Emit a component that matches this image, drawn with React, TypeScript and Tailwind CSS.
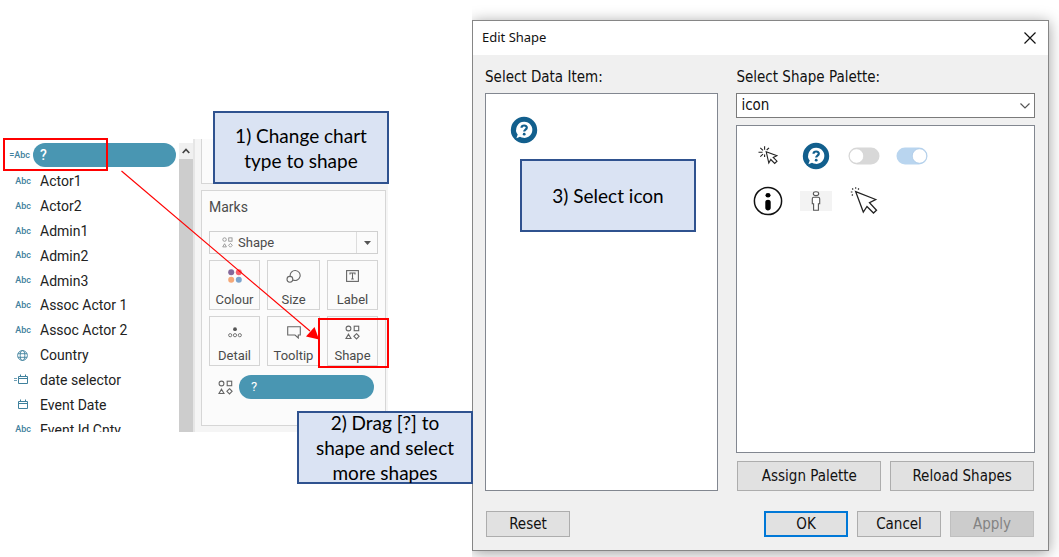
import type { ReactNode } from "react";

type FieldKind = "text" | "globe" | "date" | "calcDate";

const fields: { name: string; kind: FieldKind }[] = [
  { name: "Actor1", kind: "text" },
  { name: "Actor2", kind: "text" },
  { name: "Admin1", kind: "text" },
  { name: "Admin2", kind: "text" },
  { name: "Admin3", kind: "text" },
  { name: "Assoc Actor 1", kind: "text" },
  { name: "Assoc Actor 2", kind: "text" },
  { name: "Country", kind: "globe" },
  { name: "date selector", kind: "calcDate" },
  { name: "Event Date", kind: "date" },
  { name: "Event Id Cnty", kind: "text" },
];

function CalendarIcon() {
  return (
    <svg width="10" height="11" viewBox="0 0 10 11" fill="none" stroke="#3f819d" aria-hidden="true">
      <path d="M.5 2.500h9v7h-9zM.5 4.500h9M2.500 .5v2M7.500 .5v2" />
    </svg>
  );
}

function FieldIcon({ kind }: { kind: FieldKind }) {
  if (kind === "text") return <span>Abc</span>;
  if (kind === "globe")
    return (
      <svg width="11" height="11" viewBox="0 0 11 11" fill="none" stroke="#3f819d" strokeWidth=".9" className="mr-[3px]" aria-hidden="true">
        <circle cx="5.500" cy="5.500" r="4.900" />
        <ellipse cx="5.500" cy="5.500" rx="2.300" ry="4.900" />
        <path d="M1 3.700h9M1 7.300h9" />
      </svg>
    );
  return (
    <span className="mr-[3px] flex items-center">
      {kind === "calcDate" && (
        <svg width="4" height="5" viewBox="0 0 4 5" stroke="#6fa0b6" aria-hidden="true">
          <path d="M0 1.500h3M0 3.500h3" />
        </svg>
      )}
      <CalendarIcon />
    </span>
  );
}

function ShapesIcon({ size = 15, color = "#666" }: { size?: number; color?: string }) {
  return (
    <svg width={size} height={size} viewBox="0 0 15 15" fill="none" stroke={color} strokeWidth="1.100" aria-hidden="true">
      <circle cx="3.500" cy="3.500" r="2.400" />
      <rect x="9.200" y="1.200" width="4.500" height="4.500" />
      <path d="M3.500 9.200 6 13.500H1zM11.500 8.700l2.600 2.600-2.600 2.600-2.600-2.600z" />
    </svg>
  );
}

const marks: { name: string; icon: ReactNode }[] = [
  {
    name: "Colour",
    icon: (
      <svg width="14" height="14" viewBox="0 0 14 14" aria-hidden="true">
        <circle cx="3.200" cy="3.200" r="3" fill="#85689a" />
        <circle cx="10.800" cy="3.200" r="3" fill="#f8606b" />
        <circle cx="3.200" cy="10.800" r="3" fill="#f5a878" />
        <circle cx="10.800" cy="10.800" r="3" fill="#7ba3cc" />
      </svg>
    ),
  },
  {
    name: "Size",
    icon: (
      <svg width="15" height="14" viewBox="0 0 15 14" fill="none" stroke="#666" strokeWidth="1.100" aria-hidden="true">
        <path d="M4.200 7.200A5 5 0 1 1 7 11" />
        <circle cx="3.900" cy="10.300" r="2.900" />
      </svg>
    ),
  },
  {
    name: "Label",
    icon: (
      <svg width="13" height="12" viewBox="0 0 13 12" fill="none" stroke="#666" strokeWidth="1.100" aria-hidden="true">
        <rect x=".6" y=".6" width="11.800" height="10.800" />
        <path d="M4 4.500V3h5v1.500M6.500 3v6M5.200 9h2.600" />
      </svg>
    ),
  },
  {
    name: "Detail",
    icon: (
      <svg width="14" height="11" viewBox="0 0 14 11" fill="none" stroke="#777" aria-hidden="true">
        <circle cx="7" cy="2.200" r="1.900" fill="#555" stroke="none" />
        <circle cx="2.200" cy="8.200" r="1.600" />
        <circle cx="7" cy="8.200" r="1.600" />
        <circle cx="11.800" cy="8.200" r="1.600" />
      </svg>
    ),
  },
  {
    name: "Tooltip",
    icon: (
      <svg width="14" height="13" viewBox="0 0 14 13" fill="none" stroke="#666" strokeWidth="1.100" aria-hidden="true">
        <path d="M.7 .7h12.600v8.300h-2v3L8 9H.7z" />
      </svg>
    ),
  },
  { name: "Shape", icon: <ShapesIcon /> },
];

function HelpIcon() {
  return (
    <svg width="28" height="28" viewBox="0 0 28 28" aria-hidden="true">
      <circle cx="14" cy="14" r="13.200" fill="#125f8d" />
      <path d="M14.200 5.700a8.100 8.100 0 1 1-4.200 15l-3.600 1.500 1.300-3.600A8.100 8.100 0 0 1 14.200 5.700z" fill="#fff" />
      <path d="M11.500 11.700c.2-3 5.500-2.900 5.300 0-.1 1.900-2.600 1.900-2.600 3.900" fill="none" stroke="#125f8d" strokeWidth="2.200" />
      <circle cx="14.200" cy="18.200" r="1.400" fill="#125f8d" />
    </svg>
  );
}

function ToggleIcon({ on }: { on?: boolean }) {
  return (
    <svg width="32" height="18" viewBox="0 0 32 18" aria-hidden="true">
      <rect x=".5" y=".5" width="31" height="17" rx="8.500" fill={on ? "#b9d5ef" : "#d8d8d8"} />
      <circle cx={on ? 23.500 : 8.500} cy="9" r="7.200" fill="#fff" stroke={on ? "#a3c3e2" : "#cfcfcf"} strokeWidth=".6" />
    </svg>
  );
}

const shapes: { name: string; icon: ReactNode }[] = [
  {
    name: "Click cursor",
    icon: (
      <svg width="20" height="20" viewBox="0 0 20 20" fill="none" stroke="#222" strokeWidth="1.100" aria-hidden="true">
        <path d="M8.200 5.700L19 9.700l-3.800 1.700 3.800 3.800-2.300 2.300-3.900-4-2 3.500z" />
        <path d="M.5 6.200h4M2.300 1.800l2.700 2.500M6.600 .3v3.500M11 1.800L8.700 4M2.300 10.600l2.700-2.500M6.600 8.500v2.500" />
      </svg>
    ),
  },
  { name: "Help", icon: <HelpIcon /> },
  { name: "Toggle off", icon: <ToggleIcon /> },
  { name: "Toggle on", icon: <ToggleIcon on /> },
  {
    name: "Information",
    icon: (
      <svg width="30" height="30" viewBox="0 0 30 30" aria-hidden="true">
        <circle cx="15" cy="15" r="13.600" fill="none" stroke="#111" strokeWidth="1.500" />
        <ellipse cx="15" cy="9.300" rx="2.500" ry="2.300" />
        <path d="M12.300 16c0-3 5.400-3 5.400 0v6c0 3.200-5.400 3.200-5.400 0z" />
      </svg>
    ),
  },
  {
    name: "Person",
    icon: (
      <svg width="32" height="20" viewBox="0 0 32 20" aria-hidden="true">
        <rect width="32" height="20" fill="#f3f3f3" />
        <g fill="#fff" stroke="#555" strokeWidth="1.100">
          <ellipse cx="16" cy="2.700" rx="2.700" ry="1.900" />
          <path d="M13.800 6.200h4.400q1.500 0 1.500 1.500v5h-1.300v6.500h-4.800v-6.500h-1.300v-5q0-1.500 1.500-1.500z" />
        </g>
      </svg>
    ),
  },
  {
    name: "Large cursor",
    icon: (
      <svg width="28" height="28" viewBox="0 0 28 28" fill="none" stroke="#222" strokeWidth="1.300" aria-hidden="true">
        <path d="M5.700 4.700l20 7.800-6.200 3.300 7 7.500-3 2.700-6.500-6.500-3.700 5.500z" />
        <path d="M.8 5h1.600M2.200 1.500l1 1M5.700 .3v1.500M9 1.500l-1 1M1.800 8.500l1-1" strokeWidth="1.100" />
      </svg>
    ),
  },
];

function Callout({ children, className }: { children: ReactNode; className: string }) {
  return (
    <p
      className={`absolute flex h-[73px] w-44 items-center justify-center border-2 border-[#2f528f] bg-[#dae3f3] text-center font-['Lato',sans-serif] text-[19px] leading-[25px] text-black ${className}`}
    >
      {children}
    </p>
  );
}

function DataPane() {
  return (
    <nav aria-label="Fields" className="flex w-[193px] overflow-hidden bg-white pt-1">
      <div className="min-w-0 flex-1">
        <div className="flex h-[26px] items-start">
          <span className="w-[33px] pr-[3px] text-right text-[9px] leading-6 font-medium text-[#3f819d]">=Abc</span>
          <button className="h-6 w-[143px] rounded-full bg-[#4996b2] pl-[7px] text-left text-sm font-medium text-white">?</button>
        </div>
        <ul className="grid h-[273px] grid-rows-11">
          {fields.map((f) => (
            <li key={f.name}>
              <button className="flex h-full w-full items-center text-left text-sm whitespace-nowrap text-[#222]">
                <span className="flex w-10 justify-end pr-[9px] text-[9px] font-medium text-[#3f819d]">
                  <FieldIcon kind={f.kind} />
                </span>
                {f.name}
              </button>
            </li>
          ))}
        </ul>
      </div>
      <div className="w-3.5 bg-[#cdcdcd]">
        <button aria-label="Scroll up" className="flex h-4 w-full items-center justify-center bg-[#f0f0f0]">
          <svg width="8" height="6" viewBox="0 0 8 6" fill="none" stroke="#444" strokeWidth="1.700" aria-hidden="true">
            <path d="M.7 5L4 1.500 7.300 5" />
          </svg>
        </button>
      </div>
    </nav>
  );
}

function MarksCard() {
  return (
    <div className="flex w-[195px] flex-col gap-1.5 border-l-2 border-[#e6e6e6] bg-[#f5f5f5] pr-0.5 pb-1.5 pl-1.5">
      <div className="h-[45px] border border-t-0 border-[#d6d6d6] bg-[#fbfbfb]" />
      <section className="flex-1 border border-[#d6d6d6] bg-[#fbfbfb] px-[7px] pt-1.5 text-[#4b4b4b]">
        <h2 className="text-sm leading-5">Marks</h2>
        <div className="relative mt-3.5 flex h-[23px] items-center border border-[#d0d0d0]">
          <span className="pointer-events-none absolute left-3">
            <ShapesIcon size={11} color="#888" />
          </span>
          <select aria-label="Mark type" className="h-full w-full appearance-none pl-7 text-[13px]">
            <option>Shape</option>
          </select>
          <span className="pointer-events-none absolute right-0 flex h-full w-[21px] items-center justify-center border-l border-[#ddd]">
            <svg width="7" height="4" viewBox="0 0 7 4" fill="#555" aria-hidden="true">
              <path d="M0 0h7L3.500 4z" />
            </svg>
          </span>
        </div>
        <div className="mt-1.5 grid grid-cols-[51px_53px_51px] justify-between gap-y-1.5">
          {marks.map((m) => (
            <button key={m.name} className="flex h-[50px] flex-col items-center border border-[#d4d4d4] text-[13px] leading-[18px]">
              <span className="flex h-[30px] items-center">{m.icon}</span>
              {m.name}
            </button>
          ))}
        </div>
        <div className="mt-[9px] flex items-center gap-1.5 pr-1 pl-[9px]">
          <ShapesIcon />
          <button className="h-6 flex-1 rounded-full bg-[#4996b2] pl-3 text-left text-[13px] text-white">?</button>
        </div>
      </section>
    </div>
  );
}

const dialogButton = "h-[26px] w-[84px]";

function EditShapeDialog() {
  return (
    <div className="flex flex-1 overflow-hidden pt-5 pr-2.5 pb-1.5">
      <section
        aria-labelledby="dialog-title"
        className="flex flex-1 flex-col border border-[#868686] bg-[#f0f0f0] font-['DejaVu_Sans_Condensed','DejaVu_Sans',sans-serif] text-[15px] text-[#111] shadow-[0_2px_14px_rgba(0,0,0,0.38)]"
      >
        <header className="flex h-[34px] items-center justify-between bg-white pr-3 pl-[9px]">
          <h1 id="dialog-title" className="font-['Noto_Sans',sans-serif] text-[13px]">Edit Shape</h1>
          <button aria-label="Close">
            <svg width="12" height="12" viewBox="0 0 12 12" stroke="#111" strokeWidth="1.200" aria-hidden="true">
              <path d="M.5 .5l11 11M11.500 .5l-11 11" />
            </svg>
          </button>
        </header>
        <div className="flex flex-1 gap-[18px] pt-3 pr-[13px] pl-3">
          <div className="flex flex-[233_1_0] flex-col">
            <h2 className="mb-1.5 leading-5">Select Data Item:</h2>
            <div className="relative flex-1 border border-[#828790] bg-white">
              <button aria-label="?" className="mt-[22px] ml-6 block">
                <HelpIcon />
              </button>
              <Callout className="top-[65px] left-[34px]">3) Select icon</Callout>
            </div>
          </div>
          <div className="flex flex-[298_1_0] flex-col">
            <label htmlFor="palette" className="mb-1.5 leading-5">Select Shape Palette:</label>
            <div className="relative flex items-center">
              <select id="palette" className="h-[25px] w-full appearance-none border border-[#7a7a7a] bg-white pl-1">
                <option>icon</option>
              </select>
              <svg width="10" height="6" viewBox="0 0 10 6" fill="none" stroke="#555" strokeWidth="1.200" className="pointer-events-none absolute right-[5px]" aria-hidden="true">
                <path d="M.5 .5L5 5 9.500 .5" />
              </svg>
            </div>
            <div className="mt-[7px] flex-1 border border-[#828790] bg-white pt-[7px] pl-[7px]">
              <div className="grid auto-rows-[45px] grid-cols-[48px_48px_48px_48px]">
                {shapes.map((s) => (
                  <button key={s.name} aria-label={s.name} className="flex items-center justify-center">
                    {s.icon}
                  </button>
                ))}
              </div>
            </div>
            <div className="mt-2 flex gap-[9px] px-px">
              <button className="h-[30px] flex-1 border border-[#adadad] bg-[#e1e1e1]">Assign Palette</button>
              <button className="h-[30px] flex-1 border border-[#adadad] bg-[#e1e1e1]">Reload Shapes</button>
            </div>
          </div>
        </div>
        <footer className="flex gap-[9px] pt-5 pr-3.5 pb-[13px] pl-[13px]">
          <button className={`${dialogButton} mr-auto border border-[#adadad] bg-[#e1e1e1]`}>Reset</button>
          <button className={`${dialogButton} border-2 border-[#0078d7] bg-[#e1e1e1]`}>OK</button>
          <button className={`${dialogButton} border border-[#adadad] bg-[#e1e1e1]`}>Cancel</button>
          <button disabled className={`${dialogButton} border border-[#bfbfbf] bg-[#cccccc] text-[#838383]`}>Apply</button>
        </footer>
      </section>
    </div>
  );
}

export default function App() {
  return (
    <main className="flex min-h-screen bg-white">
      <div className="relative z-10 w-[472px] shrink-0 pt-[139px] font-['Roboto',sans-serif]">
        <div className="flex h-[293px]">
          <DataPane />
          <MarksCard />
        </div>
        <svg width="400" height="400" viewBox="0 0 400 400" className="pointer-events-none absolute top-0 left-0" fill="none" stroke="#f00" aria-hidden="true">
          <rect x="4" y="139" width="103" height="31" strokeWidth="2" />
          <rect x="319" y="319" width="69" height="48" strokeWidth="2" />
          <path d="M121.500 171L310 331" strokeWidth="1.100" />
          <path d="M319 339.500L306 336.500 314.500 327z" fill="#f00" stroke="none" />
        </svg>
        <Callout className="top-[111px] left-[213px]">
          1) Change chart
          <br />
          type to shape
        </Callout>
        <Callout className="top-[411px] left-[297px]">
          2) Drag [?] to
          <br />
          shape and select
          <br />
          more shapes
        </Callout>
      </div>
      <EditShapeDialog />
    </main>
  );
}
